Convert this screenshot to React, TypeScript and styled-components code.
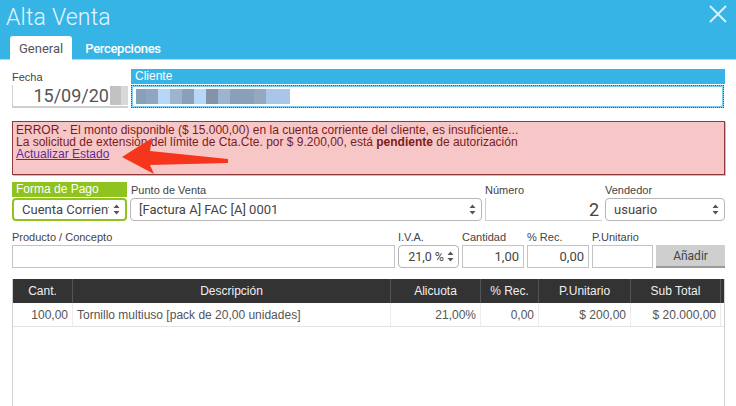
import styled, { createGlobalStyle } from "styled-components";

const GlobalStyle = createGlobalStyle`
  html, body {
    margin: 0;
    padding: 0;
    background: #ffffff;
    overflow: hidden;
  }
  * {
    box-sizing: border-box;
  }
`;

const columns = [
  { title: "Cant.", width: 60 },
  { title: "Descripción", width: 318 },
  { title: "Alicuota", width: 90 },
  { title: "% Rec.", width: 58 },
  { title: "P.Unitario", width: 92 },
  { title: "Sub Total", width: 90 },
];

const items = [
  {
    cant: "100,00",
    desc: "Tornillo multiuso [pack de 20,00 unidades]",
    alicuota: "21,00%",
    rec: "0,00",
    unit: "$ 200,00",
    total: "$ 20.000,00",
  },
];

const blurBlocks = [
  { w: 10, c: "#8aa0b8" },
  { w: 12, c: "#8ea6c0" },
  { w: 12, c: "#b8d6f5" },
  { w: 12, c: "#9db4cf" },
  { w: 12, c: "#8aa0b8" },
  { w: 12, c: "#b8d6f5" },
  { w: 12, c: "#8394a8" },
  { w: 12, c: "#9db4cf" },
  { w: 24, c: "#8aa0b8" },
  { w: 12, c: "#93a9c2" },
  { w: 12, c: "#a9c6e8" },
  { w: 12, c: "#a9c6e8" },
];

export default function App() {
  return (
    <Window>
      <GlobalStyle />
      <Header>
        <TitleRow>
          <Title>Alta Venta</Title>
          <CloseButton aria-label="Cerrar">
            <svg width="20" height="20" viewBox="0 0 20 20">
              <path d="M2 2 L18 18 M18 2 L2 18" stroke="#d8f0fb" strokeWidth="2" fill="none" />
            </svg>
          </CloseButton>
        </TitleRow>
        <Tabs>
          <Tab $active>General</Tab>
          <Tab>Percepciones</Tab>
        </Tabs>
      </Header>

      <Body>
        <Row>
          <Field $width={116}>
            <Label>Fecha</Label>
            <DateInput>
              <span>15/09/20</span>
              <Smudge />
            </DateInput>
          </Field>
          <Field $grow>
            <BarLabel $color="#35b4e5">Cliente</BarLabel>
            <ClientInput>
              {blurBlocks.map((b, i) => (
                <Blur key={i} style={{ width: b.w, background: b.c }} />
              ))}
            </ClientInput>
          </Field>
        </Row>

        <ErrorBox>
          <div>ERROR - El monto disponible ($ 15.000,00) en la cuenta corriente del cliente, es insuficiente...</div>
          <div>
            La solicitud de extensión del límite de Cta.Cte. por $ 9.200,00, está <b>pendiente</b> de autorización
          </div>
          <ErrorLink href="#">Actualizar Estado</ErrorLink>
          <Arrow width="114" height="40" viewBox="0 0 114 40">
            <path
              d="M4 21 L34 2 L32 15 L110 23 L110 27 L32 29 L36 38 Z"
              fill="#f5361c"
            />
          </Arrow>
        </ErrorBox>

        <Row $top={7}>
          <Field $width={115}>
            <BarLabel $color="#8fc31f">Forma de Pago</BarLabel>
            <Select $green>
              <span>Cuenta Corriente</span>
              <Chevron />
            </Select>
          </Field>
          <Field $width={352}>
            <Label $pad>Punto de Venta</Label>
            <Select>
              <span>[Factura A] FAC [A] 0001</span>
              <Chevron />
            </Select>
          </Field>
          <Field $width={117}>
            <Label>Número</Label>
            <NumberInput>2</NumberInput>
          </Field>
          <Field $grow>
            <Label>Vendedor</Label>
            <Select>
              <span>usuario</span>
              <Chevron />
            </Select>
          </Field>
        </Row>

        <Row $top={9}>
          <Field $grow>
            <Label>Producto / Concepto</Label>
            <TextInput />
          </Field>
          <Field $width={61}>
            <Label>I.V.A.</Label>
            <Select $right $compact>
              <span>21,0 %</span>
              <Chevron />
            </Select>
          </Field>
          <Field $width={62}>
            <Label>Cantidad</Label>
            <TextInput $right>1,00</TextInput>
          </Field>
          <Field $width={62}>
            <Label>% Rec.</Label>
            <TextInput $right>0,00</TextInput>
          </Field>
          <Field $width={61}>
            <Label>P.Unitario</Label>
            <TextInput />
          </Field>
          <Field $width={69}>
            <Label>&nbsp;</Label>
            <AddButton>Añadir</AddButton>
          </Field>
        </Row>

        <Table>
          <HeadRow>
            {columns.map((c) => (
              <HeadCell key={c.title} style={{ width: c.width }}>
                {c.title}
              </HeadCell>
            ))}
            <HeadCell $filler />
          </HeadRow>
          {items.map((it) => (
            <BodyRow key={it.desc}>
              <Cell style={{ width: 60 }} $align="right">{it.cant}</Cell>
              <Cell style={{ width: 318 }}>{it.desc}</Cell>
              <Cell style={{ width: 90 }} $align="right">{it.alicuota}</Cell>
              <Cell style={{ width: 58 }} $align="right">{it.rec}</Cell>
              <Cell style={{ width: 92 }} $align="right">{it.unit}</Cell>
              <Cell style={{ width: 90 }} $align="right">{it.total}</Cell>
            </BodyRow>
          ))}
        </Table>
      </Body>
    </Window>
  );
}

function Chevron() {
  return (
    <ChevronIcon width="7" height="11" viewBox="0 0 7 11">
      <path d="M0.5 4 L3.5 0.5 L6.5 4 Z M0.5 7 L3.5 10.5 L6.5 7 Z" fill="#555" />
    </ChevronIcon>
  );
}

const Window = styled.div`
  width: 736px;
  height: 406px;
  display: flex;
  flex-direction: column;
  background: #ffffff;
  font-family: "Liberation Sans", Arial, sans-serif;
`;

const Header = styled.div`
  background: #35b4e5;
  height: 60px;
  display: flex;
  flex-direction: column;
  border-bottom: 1px solid #a8dcf2;
`;

const TitleRow = styled.div`
  height: 36px;
  display: flex;
  align-items: center;
  justify-content: space-between;
  padding: 0 8px 2px 6px;
`;

const Title = styled.h1`
  margin: 0;
  font-family: Roboto, "Liberation Sans", sans-serif;
  font-weight: 300;
  font-size: 23px;
  color: #e6f6fd;
  letter-spacing: 0.2px;
`;

const CloseButton = styled.div`
  width: 20px;
  height: 20px;
  display: flex;
  margin-top: -6px;
`;

const Tabs = styled.div`
  display: flex;
  align-items: flex-end;
  padding-left: 10px;
  flex: 1;
  gap: 9px;
`;

const Tab = styled.div<{ $active?: boolean }>`
  height: 24px;
  padding: 0 9px;
  display: flex;
  align-items: center;
  font-family: Roboto, "Liberation Sans", sans-serif;
  font-size: 13px;
  border-radius: 3px 3px 0 0;
  background: ${({ $active }) => ($active ? "#ffffff" : "transparent")};
  color: ${({ $active }) => ($active ? "#555555" : "#ffffff")};
  font-weight: ${({ $active }) => ($active ? 400 : 500)};
  letter-spacing: ${({ $active }) => ($active ? "0" : "-0.3px")};
  ${({ $active }) => (!$active ? "padding: 0 4px;" : "")}
  margin-bottom: -1px;
`;

const Body = styled.div`
  flex: 1;
  display: flex;
  flex-direction: column;
  padding: 9px 11px 0 12px;
`;

const Row = styled.div<{ $top?: number }>`
  display: flex;
  align-items: flex-end;
  gap: 3px;
  margin-top: ${({ $top }) => $top ?? 0}px;
`;

const Field = styled.div<{ $width?: number; $grow?: boolean }>`
  display: flex;
  flex-direction: column;
  ${({ $width }) => ($width ? `width: ${$width}px;` : "")}
  ${({ $grow }) => ($grow ? "flex: 1; min-width: 0;" : "flex-shrink: 0;")}
`;

const Label = styled.div<{ $pad?: boolean }>`
  font-size: 11px;
  color: #444444;
  height: 15px;
  line-height: 14px;
  padding-left: ${({ $pad }) => ($pad ? "1px" : "0")};
  white-space: nowrap;
`;

const BarLabel = styled.div<{ $color: string }>`
  background: ${({ $color }) => $color};
  color: #ffffff;
  font-size: 12px;
  height: 15px;
  line-height: 15px;
  padding-left: 4px;
  margin-bottom: 1px;
`;

const DateInput = styled.div`
  height: 23px;
  display: flex;
  justify-content: flex-end;
  align-items: center;
  border-left: 1px solid #cfcfcf;
  border-bottom: 2px solid #cfcfcf;
  font-family: Roboto, "Liberation Sans", sans-serif;
  font-size: 18px;
  color: #555555;
  line-height: 1;
`;

const Smudge = styled.span`
  width: 18px;
  height: 19px;
  margin-left: 1px;
  background: linear-gradient(90deg, #c2c2c2 0 60%, #d8d8d8 60% 100%);
`;

const ClientInput = styled.div`
  height: 23px;
  display: flex;
  align-items: stretch;
  padding: 2px 3px;
  border: 2px solid #7cccef;
  outline: 1px dotted #555;
  outline-offset: -1px;
  margin-right: 1px;
`;

const Blur = styled.span`
  display: block;
`;

const ErrorBox = styled.div`
  position: relative;
  margin-top: 13px;
  height: 54px;
  padding: 2px 3px;
  background: #f7c7c7;
  border: 1px solid #8d3b3b;
  box-shadow: 1px 1px 0 #d9b7b7;
  color: #7a1c1c;
  font-size: 12px;
  line-height: 12px;

  b {
    font-weight: bold;
  }
`;

const ErrorLink = styled.a`
  color: #5b2d9b;
  text-decoration: underline;
`;

const Arrow = styled.svg`
  position: absolute;
  left: 105px;
  top: 14px;
`;

const Select = styled.div<{ $green?: boolean; $right?: boolean; $compact?: boolean }>`
  height: 23px;
  display: flex;
  align-items: center;
  justify-content: ${({ $right }) => ($right ? "flex-end" : "space-between")};
  gap: ${({ $compact }) => ($compact ? "3px" : "4px")};
  padding: 0 ${({ $compact }) => ($compact ? "4px" : "5px")} 0 8px;
  border: ${({ $green }) => ($green ? "2px solid #8fc31f" : "1px solid #b5b5b5")};
  border-radius: 4px;
  font-family: Roboto, "Liberation Sans", sans-serif;
  font-size: ${({ $compact }) => ($compact ? "12.5px" : "13px")};
  color: #444444;
  background: #ffffff;
  white-space: nowrap;
  overflow: hidden;

  span {
    overflow: hidden;
    flex: ${({ $right }) => ($right ? "0 0 auto" : "1")};
  }
`;

const ChevronIcon = styled.svg`
  flex-shrink: 0;
`;

const NumberInput = styled.div`
  height: 23px;
  display: flex;
  align-items: flex-end;
  justify-content: flex-end;
  padding: 0 3px 1px 0;
  border-left: 1px solid #cfcfcf;
  border-bottom: 1px solid #cfcfcf;
  font-family: Roboto, "Liberation Sans", sans-serif;
  font-size: 18px;
  color: #444444;
  line-height: 1;
`;

const TextInput = styled.div<{ $right?: boolean }>`
  height: 23px;
  display: flex;
  align-items: center;
  justify-content: ${({ $right }) => ($right ? "flex-end" : "flex-start")};
  padding: 0 4px;
  border: 1px solid #c4c4c4;
  font-family: Roboto, "Liberation Sans", sans-serif;
  font-size: 13px;
  color: #444444;
`;

const AddButton = styled.div`
  height: 23px;
  display: flex;
  align-items: center;
  justify-content: center;
  background: #cfcfcf;
  border-bottom: 2px solid #9a9a9a;
  font-family: Roboto, "Liberation Sans", sans-serif;
  font-size: 12px;
  color: #444444;
`;

const Table = styled.div`
  margin-top: 11px;
  flex: 1;
  display: flex;
  flex-direction: column;
  border-left: 1px solid #cfcfcf;
  border-right: 1px solid #cfcfcf;
`;

const HeadRow = styled.div`
  display: flex;
  height: 24px;
  background: #333333;
`;

const HeadCell = styled.div<{ $filler?: boolean }>`
  ${({ $filler }) => ($filler ? "flex: 1;" : "flex-shrink: 0;")}
  display: flex;
  align-items: center;
  justify-content: center;
  color: #f0f0f0;
  font-size: 12px;
  border-right: 1px solid #555555;
  &:last-child {
    border-right: none;
  }
`;

const BodyRow = styled.div`
  display: flex;
  height: 24px;
  border-bottom: 1px solid #e4e4e4;
`;

const Cell = styled.div<{ $align?: "left" | "right" }>`
  flex-shrink: 0;
  display: flex;
  align-items: center;
  justify-content: ${({ $align }) => ($align === "right" ? "flex-end" : "flex-start")};
  padding: 0 4px;
  font-size: 12px;
  color: #555555;
  border-right: 1px solid #ececec;
  white-space: nowrap;
`;
